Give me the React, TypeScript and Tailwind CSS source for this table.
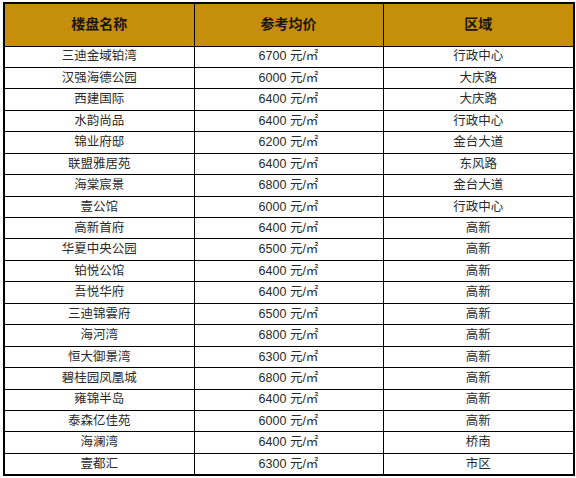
import React from "react";

const rows: [string, string, string][] = [
  ["三迪金域铂湾", "6700", "行政中心"],
  ["汉强海德公园", "6000", "大庆路"],
  ["西建国际", "6400", "大庆路"],
  ["水韵尚品", "6400", "行政中心"],
  ["锦业府邸", "6200", "金台大道"],
  ["联盟雅居苑", "6400", "东风路"],
  ["海棠宸景", "6800", "金台大道"],
  ["壹公馆", "6000", "行政中心"],
  ["高新首府", "6400", "高新"],
  ["华夏中央公园", "6500", "高新"],
  ["铂悦公馆", "6400", "高新"],
  ["吾悦华府", "6400", "高新"],
  ["三迪锦雲府", "6500", "高新"],
  ["海河湾", "6800", "高新"],
  ["恒大御景湾", "6300", "高新"],
  ["碧桂园凤凰城", "6800", "高新"],
  ["雍锦半岛", "6400", "高新"],
  ["泰森亿佳苑", "6000", "高新"],
  ["海澜湾", "6400", "桥南"],
  ["壹都汇", "6300", "市区"],
];

export default function App() {
  return (
    <div className="w-[576px] h-[478px] bg-white overflow-hidden pt-[2px] pl-[3px] font-['Liberation_Sans','Noto_Sans_CJK_SC',sans-serif]">
      <table className="w-[570px] table-fixed border-collapse border-2 border-black">
        <colgroup>
          <col className="w-[190px]" />
          <col className="w-[189px]" />
          <col className="w-[191px]" />
        </colgroup>
        <thead>
          <tr className="h-[43px] bg-[#c68f0b] text-[14px] font-bold text-[#1c1608]">
            <th className="border border-black text-center">楼盘名称</th>
            <th className="border border-black text-center">参考均价</th>
            <th className="border border-black text-center">区域</th>
          </tr>
        </thead>
        <tbody className="text-[12.5px] text-[#2a2a2a]">
          {rows.map(([name, price, area]) => (
            <tr key={name} className="h-[21.45px]">
              <td className="border border-black text-center leading-none">{name}</td>
              <td className="border border-black text-center leading-none">{price} 元/㎡</td>
              <td className="border border-black text-center leading-none">{area}</td>
            </tr>
          ))}
        </tbody>
      </table>
    </div>
  );
}
